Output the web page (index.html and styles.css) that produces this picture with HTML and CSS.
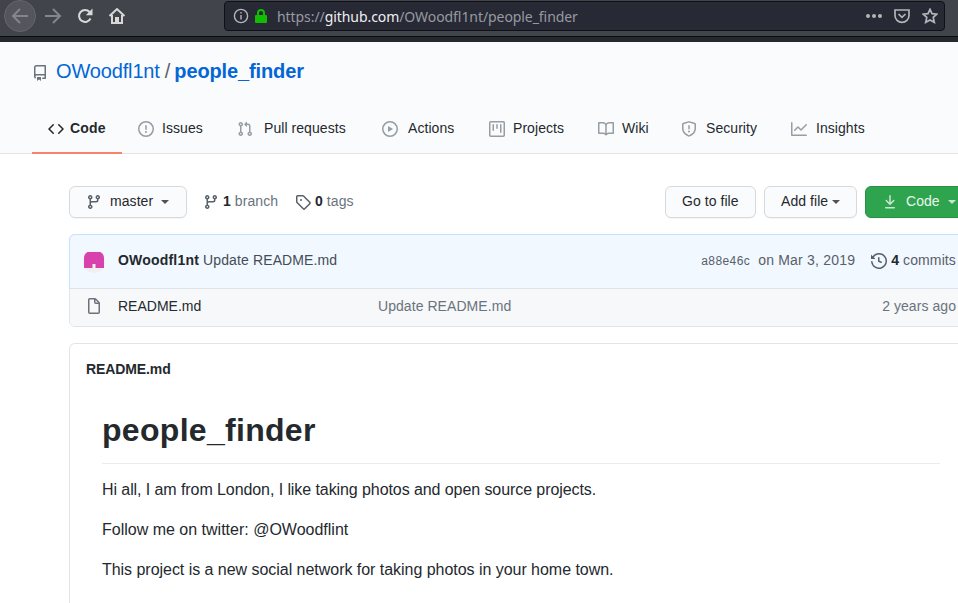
FILE: index.html
```html
<!DOCTYPE html>
<html lang="en">
<head>
<meta charset="utf-8">
<title>OWoodfl1nt/people_finder</title>
<link rel="stylesheet" href="styles.css">
</head>
<body>
<svg class="defs" aria-hidden="true">
  <symbol id="branch" viewBox="0 0 16 16"><path fill-rule="evenodd" d="M11.75 2.5a.75.75 0 100 1.500.75.75 0 000-1.500zm-2.250.75a2.250 2.250 0 113 2.122V6A2.500 2.500 0 0110 8.500H6a1 1 0 00-1 1v1.128a2.251 2.251 0 11-1.500 0V5.372a2.250 2.250 0 111.500 0v1.836A2.492 2.492 0 016 7h4a1 1 0 001-1v-.628A2.250 2.250 0 019.500 3.250zM4.250 12a.75.75 0 100 1.500.75.75 0 000-1.500zM3.500 3.250a.75.75 0 111.500 0 .75.75 0 01-1.500 0z"/></symbol>
</svg>
<header class="toolbar">
  <div class="round"><svg width="18" height="18" viewBox="0 0 18 18" class="nav"><path d="M17 9H2M9 2L2 9l7 7"/></svg></div>
  <svg width="18" height="18" viewBox="0 0 18 18" class="nav forward"><path d="M1 9h15M9 2l7 7-7 7"/></svg>
  <svg width="16" height="16" viewBox="0 0 16 16" class="nav bright reload"><path d="M13.500 10.500A6 6 0 1 1 12.600 4"/><path class="solid" d="M15.500.5v6.700H8.800z"/></svg>
  <svg width="18" height="18" viewBox="0 0 18 18" class="nav bright home"><path d="M1.500 9L9 2l7.500 7M4 8v8h10V8"/><path class="solid" d="M7 10h4v6H7z"/></svg>
  <div class="address">
    <svg width="16" height="16" viewBox="0 0 16 16" class="info"><circle cx="8" cy="8" r="6.600"/><path d="M8 7v4.500M8 4v1.600"/></svg>
    <svg width="14" height="16" viewBox="0 0 14 16" class="lock"><rect x="1" y="7" width="12" height="8" rx="1"/><path d="M4 8V5a3 3 0 0 1 6 0v3"/></svg>
    <span class="url">https://<b>github.com</b>/OWoodfl1nt/people_finder</span>
    <svg width="16" height="16" viewBox="0 0 16 16" class="dots"><circle cx="2" cy="8" r="2"/><circle cx="8" cy="8" r="2"/><circle cx="14" cy="8" r="2"/></svg>
    <svg width="16" height="16" viewBox="0 0 16 16" class="pocket"><path d="M1 2h14v5.500a7 6.800 0 0 1-14 0zM4.500 6L8 9.300 11.500 6"/></svg>
    <svg width="16" height="16" viewBox="0 0 16 16" class="star"><path d="M8 1.300l2 4.400 4.800.5-3.600 3.200 1.100 4.900L8 11.900l-4.300 2.400 1.100-4.900L1.200 6.200 6 5.700z"/></svg>
  </div>
</header>
<section class="repohead">
  <h1 class="title">
    <svg class="oct repo" viewBox="0 0 16 16"><path fill-rule="evenodd" d="M2 2.500A2.500 2.500 0 014.500 0h8.750a.75.75 0 01.75.75v12.500a.75.75 0 01-.75.75h-2.500a.75.75 0 110-1.500h1.750v-2h-8a1 1 0 00-.714 1.700.75.75 0 01-1.072 1.050A2.495 2.495 0 012 11.500v-9zm10.500-1V9h-8c-.356 0-.694.074-1 .208V2.500a1 1 0 011-1h8zM5 12.250v3.250a.25.25 0 00.4.2l1.450-1.087a.25.25 0 01.3 0L8.600 15.700a.25.25 0 00.4-.2v-3.250a.25.25 0 00-.25-.25h-3.500a.25.25 0 00-.25.25z"/></svg>
    <a class="owner">OWoodfl1nt</a><span class="slash">/</span><a class="name">people_finder</a>
  </h1>
  <nav class="tabs">
    <a class="tab active"><svg class="oct" viewBox="0 0 16 16"><path fill-rule="evenodd" d="M4.720 3.220a.75.75 0 011.060 1.060L2.060 8l3.720 3.720a.75.75 0 11-1.060 1.060L.47 8.530a.75.75 0 010-1.060l4.250-4.250zm6.560 0a.75.75 0 10-1.060 1.060L13.940 8l-3.720 3.720a.75.75 0 101.060 1.060l4.250-4.250a.75.75 0 000-1.060l-4.250-4.250z"/></svg><span>Code</span></a>
    <a class="tab"><svg class="oct" viewBox="0 0 16 16"><path fill-rule="evenodd" d="M8 1.500a6.500 6.500 0 100 13 6.500 6.500 0 000-13zM0 8a8 8 0 1116 0A8 8 0 010 8zm9 3a1 1 0 11-2 0 1 1 0 012 0zm-.25-6.250a.75.75 0 00-1.500 0v3.500a.75.75 0 001.500 0v-3.500z"/></svg><span>Issues</span></a>
    <a class="tab pulls"><svg class="oct" viewBox="0 0 16 16"><path fill-rule="evenodd" d="M7.177 3.073L9.573.677A.25.25 0 0110 .854v4.792a.25.25 0 01-.427.177L7.177 3.427a.25.25 0 010-.354zM3.750 2.500a.75.75 0 100 1.500.75.75 0 000-1.500zm-2.250.75a2.250 2.250 0 113 2.122v5.256a2.251 2.251 0 11-1.500 0V5.372A2.250 2.250 0 011.500 3.250zM11 2.500h-1V4h1a1 1 0 011 1v5.628a2.251 2.251 0 101.500 0V5A2.500 2.500 0 0011 2.500zm1 10.250a.75.75 0 111.500 0 .75.75 0 01-1.500 0zM3.750 12a.75.75 0 100 1.500.75.75 0 000-1.500z"/></svg><span>Pull requests</span></a>
    <a class="tab wide"><svg class="oct" viewBox="0 0 16 16"><path fill-rule="evenodd" d="M1.500 8a6.500 6.500 0 1113 0 6.500 6.500 0 01-13 0zM8 0a8 8 0 100 16A8 8 0 008 0zM6.379 5.227A.25.25 0 006 5.442v5.117a.25.25 0 00.379.214l4.264-2.559a.25.25 0 000-.428L6.379 5.227z"/></svg><span>Actions</span></a>
    <a class="tab"><svg class="oct" viewBox="0 0 16 16"><path fill-rule="evenodd" d="M1.750 0A1.750 1.750 0 000 1.750v12.500C0 15.216.784 16 1.750 16h12.500A1.750 1.750 0 0016 14.250V1.750A1.750 1.750 0 0014.250 0H1.750zM1.500 1.750a.25.25 0 01.25-.25h12.500a.25.25 0 01.25.25v12.500a.25.25 0 01-.25.25H1.750a.25.25 0 01-.25-.25V1.750zM11.750 3a.75.75 0 00-.75.75v7.500a.75.75 0 001.500 0v-7.500a.75.75 0 00-.75-.75zm-8.250.75a.75.75 0 011.500 0v5.500a.75.75 0 01-1.500 0v-5.500zM8 3a.75.75 0 00-.75.75v3.500a.75.75 0 001.500 0v-3.500A.75.75 0 008 3z"/></svg><span>Projects</span></a>
    <a class="tab"><svg class="oct" viewBox="0 0 16 16"><path fill-rule="evenodd" d="M0 1.750A.75.75 0 01.75 1h4.253c1.227 0 2.317.59 3 1.501A3.744 3.744 0 0111.006 1h4.245a.75.75 0 01.75.75v10.500a.75.75 0 01-.75.75h-4.507a2.250 2.250 0 00-1.591.659l-.622.621a.75.75 0 01-1.060 0l-.622-.621A2.250 2.250 0 005.258 13H.75a.75.75 0 01-.75-.75V1.750zm8.755 3a2.250 2.250 0 012.250-2.250H14.500v9h-3.757c-.71 0-1.400.201-1.992.572l.004-7.322zm-1.504 7.324l.004-5.073-.002-2.253A2.250 2.250 0 005.003 2.500H1.500v9h3.757a3.750 3.750 0 011.994.574z"/></svg><span>Wiki</span></a>
    <a class="tab security"><svg class="oct" viewBox="0 0 16 16"><path fill-rule="evenodd" d="M7.467.133a1.750 1.750 0 011.066 0l5.250 1.680A1.750 1.750 0 0115 3.480V7c0 1.566-.32 3.182-1.303 4.682-.983 1.498-2.585 2.813-5.032 3.855a1.700 1.700 0 01-1.330 0c-2.447-1.042-4.049-2.357-5.032-3.855C1.320 10.182 1 8.566 1 7V3.480a1.750 1.750 0 011.217-1.667l5.250-1.680zm.61 1.429a.25.25 0 00-.153 0l-5.250 1.680a.25.25 0 00-.174.238V7c0 1.358.275 2.666 1.057 3.860.784 1.194 2.121 2.340 4.366 3.297a.2.2 0 00.154 0c2.245-.956 3.582-2.104 4.366-3.298C13.225 9.666 13.500 8.360 13.500 7V3.480a.25.25 0 00-.174-.237l-5.250-1.680zM9 10.500a1 1 0 11-2 0 1 1 0 012 0zm-.25-5.750a.75.75 0 10-1.500 0v3a.75.75 0 001.500 0v-3z"/></svg><span>Security</span></a>
    <a class="tab security"><svg class="oct" viewBox="0 0 16 16"><path fill-rule="evenodd" d="M1.500 1.750a.75.75 0 00-1.500 0v12.500c0 .414.336.75.75.75h14.500a.75.75 0 000-1.500H1.500V1.750zm14.280 2.530a.75.75 0 00-1.060-1.060L10 7.940 7.530 5.470a.75.75 0 00-1.060 0L3.220 8.720a.75.75 0 001.060 1.060L7 7.060l2.470 2.470a.75.75 0 001.060 0l5.250-5.250z"/></svg><span>Insights</span></a>
  </nav>
</section>
<main class="content">
  <div class="actions">
    <button class="btn master"><svg class="oct"><use href="#branch"/></svg><span>master</span><i class="caret"></i></button>
    <a class="stat branches"><svg class="oct"><use href="#branch"/></svg><span><b>1</b> branch</span></a>
    <a class="stat tags"><svg class="oct" viewBox="0 0 16 16"><path fill-rule="evenodd" d="M2.500 7.775V2.750a.25.25 0 01.25-.25h5.025a.25.25 0 01.177.073l6.250 6.250a.25.25 0 010 .354l-5.025 5.025a.25.25 0 01-.354 0l-6.250-6.250a.25.25 0 01-.073-.177zm-1.500 0V2.750C1 1.784 1.784 1 2.750 1h5.025c.464 0 .91.184 1.238.513l6.250 6.250a1.750 1.750 0 010 2.474l-5.026 5.026a1.750 1.750 0 01-2.474 0l-6.250-6.250A1.750 1.750 0 011 7.775zM6 5a1 1 0 100 2 1 1 0 000-2z"/></svg><span><b>0</b> tags</span></a>
    <button class="btn goto"><span>Go to file</span></button>
    <button class="btn add"><span>Add file</span><i class="caret"></i></button>
    <button class="btn green"><svg class="oct" viewBox="0 0 16 16"><path fill-rule="evenodd" d="M7.470 10.780a.75.75 0 001.060 0l3.750-3.750a.75.75 0 00-1.060-1.060L8.750 8.440V1.750a.75.75 0 00-1.500 0v6.690L4.780 5.970a.75.75 0 00-1.060 1.060l3.750 3.750zM3.750 13a.75.75 0 000 1.500h8.500a.75.75 0 000-1.500h-8.500z"/></svg><span>Code</span><i class="caret"></i></button>
  </div>
  <section class="files">
    <div class="commit">
      <svg class="avatar" width="22" height="22" viewBox="0 0 22 22"><circle cx="11" cy="11" r="11" fill="#f0f0f0"/><path fill="#d842ad" d="M4.500 1h13Q21 3 21 7v10h-8.500v-4h-3v4H1V7Q1 3 4.500 1z"/></svg>
      <span class="message"><b>OWoodfl1nt</b> Update README.md</span>
      <span class="hash">a88e46c</span><span class="date">on Mar 3, 2019</span>
      <svg class="oct history" viewBox="0 0 16 16"><path fill-rule="evenodd" d="M1.643 3.143L.427 1.927A.25.25 0 000 2.104V5.750c0 .138.112.25.25.25h3.646a.25.25 0 00.177-.427L2.715 4.215a6.500 6.500 0 11-1.180 4.458.75.75 0 10-1.493.154 8.001 8.001 0 101.600-5.684zM7.750 4a.75.75 0 01.75.75v2.992l2.028.812a.75.75 0 01-.557 1.392l-2.500-1A.75.75 0 017 8.250v-3.500A.75.75 0 017.750 4z"/></svg>
      <span class="commits"><b>4</b> commits</span>
    </div>
    <div class="file">
      <svg class="oct doc" viewBox="0 0 16 16"><path fill-rule="evenodd" d="M3.750 1.500a.25.25 0 00-.25.25v12.500c0 .138.112.25.25.25h8.500a.25.25 0 00.25-.25V6H9.750A1.750 1.750 0 018 4.250V1.500H3.750zm5.750.56v2.190c0 .138.112.25.25.25h2.190L9.500 2.060zM2 1.750C2 .784 2.784 0 3.750 0h5.086c.464 0 .909.184 1.237.513l3.414 3.414c.329.328.513.773.513 1.237v9.086A1.750 1.750 0 0112.250 16h-8.500A1.750 1.750 0 012 14.250V1.750z"/></svg>
      <span class="filename">README.md</span><span class="filemsg">Update README.md</span><span class="age">2 years ago</span>
    </div>
  </section>
  <article class="readme">
    <h2>README.md</h2>
    <div class="markdown">
      <h1>people_finder</h1>
      <p class="intro">Hi all, I am from London, I like taking photos and open source projects.</p>
      <p>Follow me on twitter: @OWoodflint</p>
      <p class="about">This project is a new social network for taking photos in your home town.</p>
    </div>
  </article>
</main>
</body>
</html>
```
FILE: styles.css
```css
* { box-sizing: border-box; }
html, body { margin: 0; height: 603px; overflow: hidden; }
body { background: #fff; color: #24292e; font: 14px/21px "Liberation Sans", Arial, sans-serif; }
.defs { display: none; }
svg { flex-shrink: 0; }
.oct { width: 16px; height: 16px; fill: currentColor; }

.toolbar { height: 42px; padding-left: 4px; background: #42444b; border-bottom: 5px solid #24292e; box-shadow: inset 0 -1px #0b0c0e; display: flex; align-items: flex-start; }
.round { width: 32px; height: 32px; border-radius: 50%; background: #55555d; border: 1px solid #65656c; display: flex; align-items: center; justify-content: center; }
.nav { fill: none; stroke: #85868b; stroke-width: 2; }
.nav .solid { fill: currentColor; stroke: none; }
.bright { stroke: #d8d8d5; color: #d8d8d5; }
.forward { margin: 7px 0 0 8px; }
.reload { margin: 8px 0 0 15px; }
.home { margin: 7px 0 0 15px; }
.address { width: 721px; height: 30px; margin: 1px 0 0 98px; padding: 0 6px 0 8px; display: flex; align-items: center; border: 1px solid #101116; border-radius: 4px; background: #272935; }
.info { fill: none; stroke: #b4b5b9; stroke-width: 1.4; }
.lock { margin-left: 5px; fill: #12bc00; }
.lock path { fill: none; stroke: #12bc00; stroke-width: 2; }
.url { flex: 1; margin-left: 9px; padding-top: 1px; color: #989aa1; font: 14px/20px "Noto Sans", sans-serif; letter-spacing: -.07px; white-space: nowrap; }
.url b { font-weight: 400; color: #f0f0f2; }
.dots { fill: #b4b5b9; }
.pocket, .star { fill: none; stroke: #b4b5b9; stroke-width: 1.7; }
.pocket { margin-left: 12px; }
.star { margin-left: 12px; }

.repohead { height: 112px; background: #fafbfc; border-bottom: 1px solid #e1e4e8; }
.title { height: 61px; margin: 0; padding: 14px 0 0 32px; display: flex; align-items: flex-start; font-size: 20px; line-height: 30px; font-weight: 400; color: #0366d6; }
.repo { margin: 9px 8px 0 0; color: #6a737d; }
.owner { letter-spacing: -.15px; }
.slash { margin: 0 4px 0 5px; color: #586069; }
.name { font-weight: 700; letter-spacing: -.12px; }
.tabs { height: 51px; display: grid; grid-template-columns: 90px 100px 144px 107px 109px 83px 110px 106px; margin-left: 32px; letter-spacing: .06px; }
.tab { display: flex; align-items: flex-start; gap: 8px; padding: 15px 0 0 16px; white-space: nowrap; }
.tab .oct { margin-top: 3px; color: #959da5; }
.tab.wide { gap: 10px; }
.tab.pulls { gap: 11px; padding-left: 15px; }
.tab.security { gap: 9px; }
.tab.active { gap: 6px; font-weight: 700; letter-spacing: .2px; border-bottom: 2px solid #f9826c; }
.tab.active .oct { color: #24292e; }

.content { padding: 32px 0 0 69px; width: 973px; }
.actions { display: flex; height: 32px; }
.btn { height: 32px; padding: 0 0 2px 16px; display: flex; align-items: center; border: 1px solid #d7dadd; border-radius: 6px; background: #fafbfc; color: #24292e; font: 14px/20px "Liberation Sans", Arial, sans-serif; letter-spacing: .06px; white-space: nowrap; box-shadow: 0 1px 0 rgba(27,31,35,.04); }
.caret { border: 4px solid transparent; border-top-color: currentColor; border-bottom: 0; opacity: .8; margin-top: 2px; }
.btn .oct { margin-top: 1px; color: #586069; }
.master { width: 118px; }
.master span { margin: 0 8px; }
.stat { display: flex; color: #6a737d; padding-top: 5px; letter-spacing: .08px; white-space: nowrap; }
.stat b, .commits b { color: #24292e; }
.stat .oct { color: #586069; margin-top: 3px; }
.branches { width: 92px; margin-left: 16px; gap: 4px; }
.tags { gap: 4px; }
.goto { width: 91px; margin-left: auto; }
.add { width: 93px; margin-left: 8px; }
.add .caret { margin-left: 4px; }
.green { width: 108px; margin-left: 8px; background: #2ea44f; border-color: #2a9147; color: #eaf6ed; }
.btn.green .oct { color: #c9e8d1; }
.green span { margin: 0 8px; }

.files { margin-top: 16px; border: 1px solid #e1e4e8; border-radius: 6px; height: 93px; width: 904px; }
.commit { height: 55px; margin: -1px; padding: 15px 16px 0 13px; border: 1px solid #c8e1ff; border-bottom-color: #dde3e9; border-radius: 6px 6px 0 0; background: #f1f8ff; display: flex; white-space: nowrap; color: #586069; }
.message { margin: 0 auto 0 13px; color: #444d56; letter-spacing: .12px; }
.message b { color: #24292e; letter-spacing: .2px; }
.hash { font-size: 12px; letter-spacing: .4px; margin-right: 8px; padding-top: 1px; }
.date { margin-right: 16px; letter-spacing: .2px; }
.history { margin: 3px 4px 0 0; }
.commits { letter-spacing: .12px; }
.avatar { margin-top: 1px; }
.file { height: 37px; margin-top: 1px; padding: 7px 16px 0; display: flex; background: #f6f8fa; border-radius: 0 0 5px 5px; color: #6a737d; letter-spacing: .06px; }
.doc { margin: 2px 16px 0 0; }
.filename { width: 260px; color: #24292e; letter-spacing: 0; }
.filemsg { margin-right: auto; }
.readme { margin-top: 16px; width: 904px; height: 260px; border: 1px solid #e1e4e8; border-bottom: 0; border-radius: 6px 6px 0 0; }
.readme h2 { margin: 0; padding: 15px 16px 0; font-size: 14px; line-height: 21px; letter-spacing: -.1px; }
.markdown { padding: 30px 32px 0; font-size: 16px; line-height: 24px; }
.markdown h1 { height: 54px; margin: 0 0 14px; font-size: 32px; line-height: 40px; letter-spacing: .3px; border-bottom: 1px solid #eaecef; }
.markdown p { margin: 0 0 16px; }
.markdown .intro { letter-spacing: -.08px; }
.markdown .about { letter-spacing: -.035px; }
.markdown p:last-child { margin-bottom: 0; }
```
